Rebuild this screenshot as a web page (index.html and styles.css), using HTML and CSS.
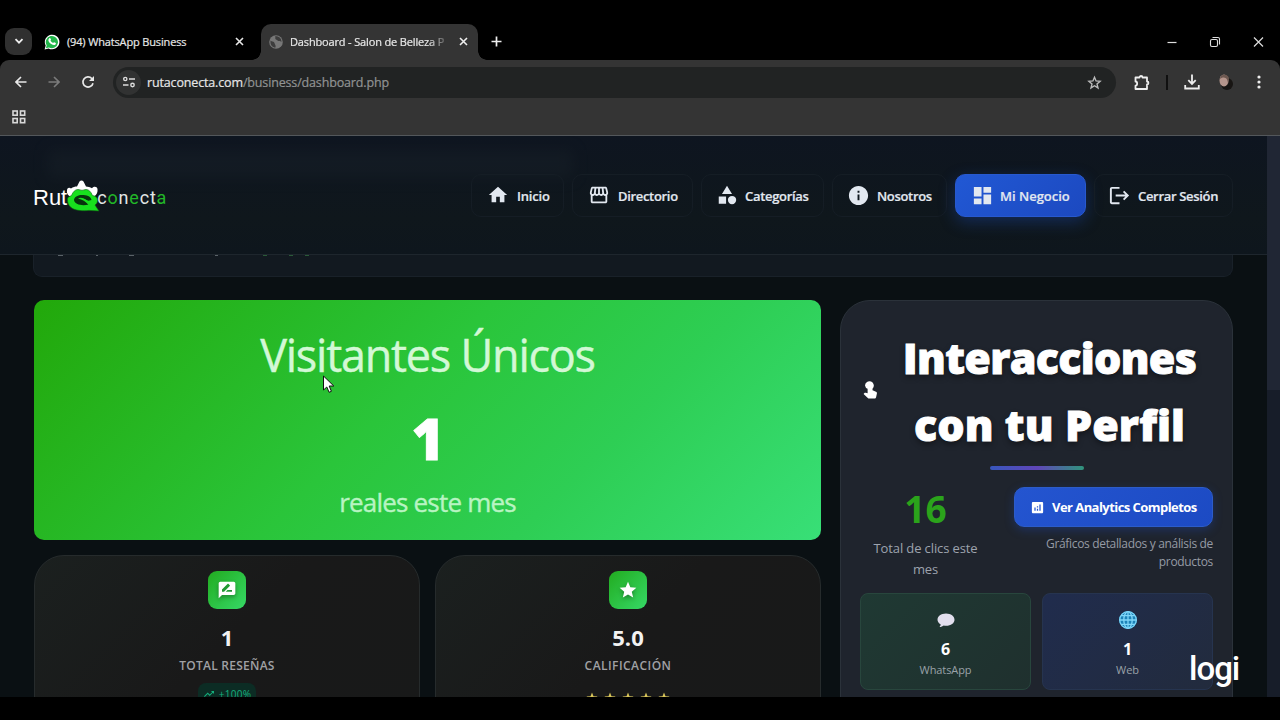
FILE: index.html
```html
<!DOCTYPE html>
<html lang="es">
<head>
  <meta charset="UTF-8">
  <meta name="viewport" content="width=device-width, initial-scale=1.0">
  <title>Dashboard - Salon de Belleza</title>
  <link rel="stylesheet" href="styles.css">
</head>
<body>
  <!-- Browser tabs -->
  <div class="tabs">
    <div class="tab-search">
      <svg width="10" height="10" viewBox="0 0 10 10"><path d="M1.5 3.2L5 6.7l3.5-3.5" fill="none" stroke="#eee" stroke-width="1.8"/></svg>
    </div>
    <div class="tab">
      <svg class="favicon" width="16" height="16" viewBox="0 0 16 16">
        <path d="M.6 15.5l1.1-4A7.3 7.3 0 1 1 4.600 14.400z" fill="#fff"/>
        <path d="M1.900 14.200l.8-2.900A6.100 6.100 0 1 1 4.900 13.400z" fill="#22b64a"/>
        <path d="M5.300 4.200c.5-.5 1-.3 1.200.2l.5 1.100c.1.300-.4.900-.6 1.100.6 1.200 1.500 2 2.700 2.500.4-.4.800-1.100 1.100-.9l1.600.8c.4.200-.1 1.400-.7 1.800-1 .6-2.400.2-3.900-.8-1.500-1-2.500-2.400-2.800-3.600-.1-.9.400-1.700.9-2.200z" fill="#fff"/>
      </svg>
      <span class="tab-title tab-title-wa">(94) WhatsApp Business</span>
      <svg class="tab-close" width="9" height="9" viewBox="0 0 9 9"><path d="M1 1l7 7M8 1L1 8" stroke="#e8e8e8" stroke-width="1.600"/></svg>
    </div>
    <div class="tab tab-active">
      <svg class="favicon" width="14" height="14" viewBox="0 0 14 14">
        <circle cx="7" cy="7" r="6.800" fill="#777"/>
        <path d="M1.500 5.500C3 7 5 6 5.500 8s1.500 2 1 4.500C3.500 12.500 1 10 1.500 5.500zM6 1.500c1 1.500-.5 2.500 1 3s2 2 4 1.500l1.500 1C12.500 3 9 .8 6 1.500z" fill="#3d3d3d"/>
      </svg>
      <span class="tab-title tab-title-fade">Dashboard - Salon de Belleza P</span>
      <svg class="tab-close" width="9" height="9" viewBox="0 0 9 9"><path d="M1 1l7 7M8 1L1 8" stroke="#eee" stroke-width="1.600"/></svg>
    </div>
    <svg class="new-tab" width="11" height="11" viewBox="0 0 11 11"><path d="M5.500 .5v10M.5 5.500h10" stroke="#eee" stroke-width="1.700"/></svg>
    <div class="window-buttons">
      <svg width="10" height="12" viewBox="0 0 10 12"><path d="M.5 6.500h9" stroke="#ddd" stroke-width="1.200"/></svg>
      <svg width="12" height="12" viewBox="0 0 12 12"><g fill="none" stroke="#ddd" stroke-width="1.100"><rect x="1.500" y="3.500" width="7" height="7" rx="1.500"/><path d="M3.500 1.500H9a1.500 1.500 0 0 1 1.500 1.500v5.500"/></g></svg>
      <svg width="11" height="12" viewBox="0 0 11 12"><path d="M1 1.500l9 9M10 1.500l-9 9" stroke="#ddd" stroke-width="1.200"/></svg>
    </div>
  </div>

  <!-- Browser toolbar -->
  <div class="toolbar">
    <div class="toolbar-row">
      <svg class="tb-back" width="12" height="12" viewBox="0 0 12 12"><path d="M11.500 6H1.500M6 1L1 6l5 5" fill="none" stroke="#e8e8e8" stroke-width="1.600"/></svg>
      <svg class="tb-forward" width="12" height="12" viewBox="0 0 12 12"><path d="M.5 6h10M6 1l5 5-5 5" fill="none" stroke="#7b7b7b" stroke-width="1.600"/></svg>
      <svg class="tb-reload" width="14" height="14" viewBox="0 0 14 14"><path d="M12 8.200A5.100 5.100 0 1 1 10.800 3.500l1 1" fill="none" stroke="#e8e8e8" stroke-width="1.700"/><path d="M13 1v5H8z" fill="#e8e8e8"/></svg>
      <div class="omnibox">
        <div class="site-info">
          <svg width="14" height="12" viewBox="0 0 14 12"><g fill="none" stroke="#ddd" stroke-width="1.400"><circle cx="3.300" cy="3" r="1.600"/><path d="M7 3h6M1 9h5.500"/><circle cx="10.500" cy="9" r="1.700"/></g></svg>
        </div>
        <span class="url">rutaconecta.com<span class="url-path">/business/dashboard.php</span></span>
        <svg class="bookmark" width="15" height="15" viewBox="0 0 24 24"><path d="M12 3.500l2.500 6 6.500.5-5 4.300 1.600 6.400-5.600-3.500-5.600 3.500L8 14.300 3 10l6.500-.5z" fill="none" stroke="#bbb" stroke-width="2.200"/></svg>
      </div>
      <svg class="tb-ext" width="17" height="17" viewBox="0 0 17 17"><path d="M2.500 3.500h4c0-2 3-2 3 0H14v4c1.900 0 1.900 3 0 3V15H2.500v-3.300c2.200 0 2.200-4.200 0-4.200z" fill="none" stroke="#eee" stroke-width="1.800" stroke-linejoin="round"/></svg>
      <span class="tb-divider"></span>
      <svg class="tb-download" width="16" height="16" viewBox="0 0 16 16"><path d="M8 .5v9M4.300 6.200L8 9.900l3.700-3.700M1.200 11v3.500h13.600V11" fill="none" stroke="#eee" stroke-width="1.800"/></svg>
      <svg class="avatar" width="16" height="18" viewBox="0 0 16 18">
        <ellipse cx="9" cy="11" rx="6" ry="6" fill="#181513"/>
        <ellipse cx="6" cy="7.500" rx="4.500" ry="6" fill="#b5958c"/>
        <path d="M2 6C2 1 9 0 11 5l-1 6C10 6 7 2.500 2 6z" fill="#6d5850"/>
      </svg>
      <svg class="tb-menu" width="4" height="14" viewBox="0 0 4 14"><g fill="#eee"><circle cx="2" cy="2" r="1.600"/><circle cx="2" cy="7" r="1.600"/><circle cx="2" cy="12" r="1.600"/></g></svg>
    </div>
    <div class="bookmarks-row">
      <svg width="14" height="14" viewBox="0 0 14 14"><g fill="none" stroke="#d8d8d8" stroke-width="1.600"><rect x="1" y="1" width="4.200" height="4.200"/><rect x="8.500" y="1" width="4.200" height="4.200"/><rect x="1" y="8.500" width="4.200" height="4.200"/><rect x="8.500" y="8.500" width="4.200" height="4.200"/></g></svg>
    </div>
  </div>

  <div class="viewport">
    <div class="page">
      <header class="header">
        <div class="header-ghost"></div>
        <div class="logo">
          <span class="logo-ruta">Rut</span>
          <svg class="logo-mark" width="34" height="32" viewBox="0 0 34 32">
            <path d="M1 10.500C1 8 3 7 5 8.500 7 7 9 6.500 11 6.500l2.500-5C14.500 0 16.500 0 17.500 1.500L20 6.500c2 0 4 .8 6 1.800C28 6 31 6.500 31.500 9c.3 3-.5 6-3.500 7.500H5C2 16 .5 13 1 10.500z" fill="#fff"/>
            <path d="M1.500 19c0-2 2-2.500 4-3.500C7 12 9 9.500 12 9.500c1.500 0 2.500.8 4 .8s2.500-.8 4-.8c3 0 5 2.500 6.500 6 3 .5 5 2 5 5 0 2-1 3.500-2.500 4.500l4 6-10-.6C18 31 9 31 5 27.500c-3-2.800-3.700-5.500-3.500-8.500z" fill="#18e01e" stroke="#0b5f12" stroke-width=".6"/>
            <path d="M8 19.500c1-3.500 5-5 9.500-4.500 5 .5 7.500 2 8 5l-3 .8-4.500-1.800 4.500 5.500C17 26 8 25 8 19.500z" fill="#07330d"/>
            <path d="M12 18.500c4-2 9 .5 13 7.500l-2-1c-3.500-3.500-6.500-5.500-11-6.500z" fill="#18e01e"/>
          </svg>
          <span class="logo-conecta">c<b>o</b>n<b>e</b>ct<b>a</b></span>
        </div>
        <nav class="nav">
          <a class="nav-item nav-inicio"><svg width="22" height="22" viewBox="0 0 24 24"><path d="M10 20v-6h4v6h5v-8h3L12 3 2 12h3v8z"/></svg><span>Inicio</span></a>
          <a class="nav-item nav-directorio"><svg width="22" height="22" viewBox="0 0 24 24"><path d="M21.900 8.890l-1.050-4.370c-.22-.9-1-1.520-1.910-1.520H5.050c-.9 0-1.690.63-1.900 1.520L2.100 8.890c-.24 1.020-.02 2.060.62 2.880.08.11.19.19.28.29V19c0 1.100.9 2 2 2h14c1.100 0 2-.9 2-2v-6.940c.09-.09.2-.18.28-.28.64-.82.87-1.870.62-2.890zm-2.990-3.900l1.050 4.370c.1.420.01.840-.25 1.170-.14.180-.44.470-.94.470-.61 0-1.140-.49-1.210-1.140L16.980 5l1.930-.01zM13 5h1.960l.54 4.520c.05.390-.07.780-.33 1.070-.22.260-.54.410-.95.410-.67 0-1.220-.59-1.220-1.310V5zM8.490 9.520L9.040 5H11v4.690c0 .72-.55 1.310-1.290 1.310-.34 0-.65-.15-.89-.41-.25-.29-.37-.68-.33-1.070zm-4.450-.16L5.050 5h1.970l-.58 4.860c-.08.650-.6 1.140-1.210 1.140-.49 0-.8-.29-.93-.47-.27-.32-.36-.75-.26-1.170zM5 19v-6.030c.08.010.15.030.23.030.87 0 1.660-.36 2.240-.95.6.6 1.400.95 2.310.95.87 0 1.650-.36 2.230-.93.590.570 1.390.93 2.290.93.840 0 1.640-.35 2.240-.95.580.590 1.370.950 2.240.950.080 0 .150-.020.230-.030V19H5z"/></svg><span>Directorio</span></a>
          <a class="nav-item nav-categorias"><svg width="22" height="22" viewBox="0 0 24 24"><path d="M12 2l-5.500 9h11zM3 13.500h8v8H3z"/><circle cx="17.500" cy="17.500" r="4.500"/></svg><span>Categorías</span></a>
          <a class="nav-item nav-nosotros"><svg width="23" height="23" viewBox="0 0 24 24"><path d="M12 2C6.480 2 2 6.480 2 12s4.480 10 10 10 10-4.480 10-10S17.520 2 12 2zm1 15h-2v-6h2v6zm0-8h-2V7h2v2z"/></svg><span>Nosotros</span></a>
          <a class="nav-item nav-negocio"><svg width="23" height="23" viewBox="0 0 24 24"><path d="M3 13h8V3H3v10zm0 8h8v-6H3v6zm10 0h8V11h-8v10zm0-18v6h8V3h-8z"/></svg><span>Mi Negocio</span></a>
          <a class="nav-item nav-salir"><svg width="23" height="23" viewBox="0 0 24 24"><path d="M17 7l-1.410 1.410L18.170 11H8v2h10.170l-2.580 2.580L17 17l5-5zM4 5h8V3H4c-1.100 0-2 .9-2 2v14c0 1.100.9 2 2 2h8v-2H4V5z"/></svg><span>Cerrar Sesión</span></a>
        </nav>
      </header>

      <main class="content">
        <section class="profile-bar">
          <i class="m1"></i><i class="m2"></i><i class="m3"></i><i class="m4"></i><i class="m5"></i><i class="m6"></i><i class="m7"></i>
        </section>
        <div class="columns">
          <div class="left">
            <section class="visitors">
              <h2><span>Visitantes Únicos</span></h2>
              <div class="visitors-count">1</div>
              <p><span>reales este mes</span></p>
            </section>
            <div class="stats">
              <section class="stat">
                <div class="stat-icon"><svg width="20" height="20" viewBox="0 0 24 24"><path d="M20 2H4c-1.100 0-1.990.9-1.990 2L2 22l4-4h14c1.100 0 2-.9 2-2V4c0-1.100-.9-2-2-2zM6 14v-2.470l6.880-6.880c.2-.2.510-.2.710 0l1.770 1.770c.2.2.2.510 0 .710L8.470 14H6zm12 0h-7.500l2-2H18v2z"/></svg></div>
                <div class="stat-value">1</div>
                <div class="stat-label stat-label-total">TOTAL RESEÑAS</div>
                <div class="trend"><svg width="12" height="12" viewBox="0 0 24 24"><path d="M16 6l2.290 2.290-4.880 4.880-4-4L2 16.590 3.410 18l6-6 4 4 6.300-6.290L22 12V6z"/></svg><span>+100%</span></div>
              </section>
              <section class="stat">
                <div class="stat-icon"><svg width="20" height="20" viewBox="0 0 24 24"><path d="M12 17.270L18.180 21l-1.640-7.030L22 9.240l-7.190-.61L12 2 9.190 8.630 2 9.240l5.460 4.730L5.820 21z"/></svg></div>
                <div class="stat-value">5.0</div>
                <div class="stat-label stat-label-cal">CALIFICACIÓN</div>
                <div class="stars">
                  <svg viewBox="0 0 24 24"><path d="M12 1l3 7.600 8 .4-6.200 5L19 22l-7-4.500L5 22l2.200-8L1 9l8-.4z"/></svg>
                  <svg viewBox="0 0 24 24"><path d="M12 1l3 7.600 8 .4-6.200 5L19 22l-7-4.500L5 22l2.200-8L1 9l8-.4z"/></svg>
                  <svg viewBox="0 0 24 24"><path d="M12 1l3 7.600 8 .4-6.200 5L19 22l-7-4.500L5 22l2.200-8L1 9l8-.4z"/></svg>
                  <svg viewBox="0 0 24 24"><path d="M12 1l3 7.600 8 .4-6.200 5L19 22l-7-4.500L5 22l2.200-8L1 9l8-.4z"/></svg>
                  <svg viewBox="0 0 24 24"><path d="M12 1l3 7.600 8 .4-6.200 5L19 22l-7-4.500L5 22l2.200-8L1 9l8-.4z"/></svg>
                </div>
              </section>
            </div>
          </div>

          <aside class="interactions">
            <div class="int-head">
              <svg class="touch" width="14" height="18" viewBox="0 0 14 18"><path d="M2 4.500a4.400 4.400 0 1 1 7.500 3.200v1.500l3.500 1.500c.8.400 1 .9.900 1.700l-.8 3.800c-.2.900-.8 1.300-1.600 1.300H6.200c-.6 0-1-.2-1.400-.6L.6 13l.8-.9c.4-.4.900-.5 1.400-.3l1.800.5V7.800A4.200 4.200 0 0 1 2 4.500z"/></svg>
              <h2><span class="h-line1">Interacciones</span><span class="h-line2">con tu Perfil</span></h2>
            </div>
            <div class="accent"></div>
            <div class="clicks">
              <div class="clicks-total">
                <div class="clicks-num">16</div>
                <div class="clicks-label"><span>Total de clics este</span><span>mes</span></div>
              </div>
              <div class="clicks-more">
                <a class="btn-analytics">
                  <svg width="15" height="15" viewBox="0 0 24 24"><path d="M19 3H5c-1.100 0-2 .9-2 2v14c0 1.100.9 2 2 2h14c1.100 0 2-.9 2-2V5c0-1.100-.9-2-2-2zM9 17H7v-5h2v5zm4 0h-2v-3h2v3zm0-5h-2v-2h2v2zm4 5h-2V7h2v10z"/></svg>
                  <span>Ver Analytics Completos</span>
                </a>
                <div class="more-label"><span>Gráficos detallados y análisis de</span><span>productos</span></div>
              </div>
            </div>
            <div class="channels">
              <div class="channel channel-wa">
                <svg width="20" height="20" viewBox="0 0 20 20"><path d="M10 3.500c5 0 8.500 2.800 8.500 6.200s-3.500 6-8.500 6c-.8 0-1.600-.1-2.300-.2-1 .8-2.400 1.500-4.200 1.500.8-.8 1.200-1.700 1.100-2.700C2.700 13.200 1.500 11.600 1.500 9.700c0-3.400 3.500-6.200 8.500-6.200z" fill="#e2dfee"/></svg>
                <b>6</b>
                <span class="ch-wa">WhatsApp</span>
              </div>
              <div class="channel channel-web">
                <svg width="20" height="20" viewBox="0 0 20 20"><circle cx="10" cy="10" r="9" fill="#1c83b8"/><g fill="none" stroke="#7fd6f8" stroke-width="1.300"><circle cx="10" cy="10" r="8.300"/><ellipse cx="10" cy="10" rx="4.200" ry="8.300"/><path d="M10 1.500v17M1.500 10h17M3 5.600h14M3 14.400h14"/></g></svg>
                <b>1</b>
                <span class="ch-web">Web</span>
              </div>
            </div>
          </aside>
        </div>
      </main>
    </div>
    <div class="scrollbar"><div class="thumb"></div></div>
  </div>

  <div class="watermark">logi</div>
  <svg class="cursor" width="14" height="20" viewBox="0 0 14 20"><path d="M1.500 1v14l3.300-3 2.300 5.300 2.300-1L7.200 11h4.600z" fill="#fff" stroke="#111" stroke-width="1"/></svg>
</body>
</html>
```
FILE: styles.css
```css
* {
  box-sizing: border-box;
}
body {
  margin: 0;
  width: 1280px;
  height: 720px;
  overflow: hidden;
  position: relative;
  background: #000;
  color: #fff;
  font-family: "Open Sans", "Noto Sans", sans-serif;
  display: flex;
  flex-direction: column;
}
svg {
  display: block;
  flex: none;
}
h2, p {
  margin: 0;
}
span {
  white-space: nowrap;
}

/* browser */
.tabs {
  height: 60px;
  padding: 24px 16px 0 5px;
  display: flex;
  align-items: center;
  flex: none;
}
.tab-search {
  width: 27px;
  height: 27px;
  margin-bottom: 2px;
  border-radius: 9px;
  background: #303030;
  display: flex;
  align-items: center;
  justify-content: center;
}
.tab {
  display: flex;
  align-items: center;
  width: 229px;
  height: 36px;
  padding-left: 12px;
  padding-bottom: 1px;
}
.tab-active {
  position: relative;
  width: 217px;
  padding-left: 8px;
  padding-right: 10px;
  background: #343434;
  border-radius: 10px 10px 0 0;
}
.tab-active::before, .tab-active::after {
  content: "";
  position: absolute;
  bottom: 0;
  width: 9px;
  height: 9px;
}
.tab-active::before {
  left: -9px;
  background: radial-gradient(circle at 0 0, transparent 8.500px, #343434 9px);
}
.tab-active::after {
  right: -9px;
  background: radial-gradient(circle at 100% 0, transparent 8.500px, #343434 9px);
}
.tab-title {
  font-size: 11px;
  margin-left: 7px;
  flex: 1;
  color: #e8e8e8;
  letter-spacing: -0.150px;
  -webkit-text-stroke: 0.200px #e8e8e8;
}
.tab .tab-close {
  margin-right: 17px;
}
.tab-active .tab-close {
  margin: 0 0 0 10px;
}
.tab-title-fade {
  -webkit-mask-image: linear-gradient(to right, #000 138px, transparent 160px);
  mask-image: linear-gradient(to right, #000 138px, transparent 160px);
}
.new-tab {
  margin: 0 0 1px 13px;
}
.window-buttons {
  margin: 0 0 1px auto;
  display: flex;
  align-items: center;
  gap: 32px;
}
.toolbar {
  height: 76px;
  flex: none;
  background: #343434;
  border-radius: 9px 9px 0 0;
  border-bottom: 1px solid #53575b;
}
.toolbar-row {
  height: 44px;
  padding-left: 15px;
  display: flex;
  align-items: center;
}
.tb-forward {
  margin-left: 21px;
}
.tb-reload {
  margin-left: 21px;
}
.omnibox {
  width: 1003px;
  height: 31px;
  margin-left: 18px;
  padding: 0 14px 0 3px;
  border-radius: 16px;
  background: #212323;
  display: flex;
  align-items: center;
}
.site-info {
  width: 25px;
  height: 25px;
  border-radius: 50%;
  background: #313232;
  display: flex;
  align-items: center;
  justify-content: center;
}
.url {
  margin-left: 6px;
  font-size: 12.500px;
  letter-spacing: -0.150px;
  color: #e6e6e6;
  -webkit-text-stroke: 0.200px currentColor;
}
.url-path {
  color: #919393;
}
.bookmark {
  margin-left: auto;
}
.tb-ext {
  margin-left: 17px;
}
.tb-divider {
  width: 2px;
  height: 15px;
  margin-left: 16px;
  background: #101010;
}
.tb-download {
  margin-left: 16px;
}
.avatar {
  margin-left: 18px;
}
.tb-menu {
  margin-left: 23px;
}
.bookmarks-row {
  padding: 6px 0 0 12px;
}

/* page */
.viewport {
  height: 561px;
  flex: none;
  display: flex;
  overflow: hidden;
  background: #0a1013;
}
.page {
  width: 1267px;
}
.scrollbar {
  width: 13px;
  background: #171d29;
}
.thumb {
  height: 254px;
  background: #202634;
}
.header {
  position: relative;
  height: 119px;
  padding: 0 34px 0 33px;
  display: flex;
  align-items: center;
  justify-content: space-between;
  background: linear-gradient(to bottom, #0e1520, #0f171c 70%, #0e161d);
  border-bottom: 1px solid #1e262d;
}
.header-ghost {
  position: absolute;
  left: 48px;
  top: 14px;
  width: 525px;
  height: 28px;
  background: #182028;
  opacity: 0.5;
  filter: blur(7px);
}
.logo {
  position: relative;
  display: flex;
  align-items: center;
  height: 44px;
  font-family: "Liberation Sans", sans-serif;
}
.logo-ruta {
  font-size: 22px;
  margin-top: 6px;
}
.logo-mark {
  margin: 1px -3px 0 -1px;
}
.logo-conecta {
  font-family: Roboto, sans-serif;
  font-size: 18px;
  color: #e2e6e6;
  letter-spacing: 0.800px;
  margin-top: 4px;
}
.logo-conecta b {
  color: #22b728;
  font-weight: 400;
}
.nav {
  position: relative;
  display: flex;
  gap: 8px;
}
.nav-item {
  height: 43px;
  border: 1px solid #151d25;
  border-radius: 10px;
  padding-left: 15px;
  display: flex;
  align-items: center;
  gap: 8px;
  font-size: 13px;
  font-weight: 600;
  letter-spacing: -0.320px;
  color: #e2e8f0;
  fill: #e2e8f0;
  -webkit-text-stroke: 0.200px #e2e8f0;
}
.nav-item span {
  padding-top: 1px;
}
.nav-item svg {
  -webkit-text-stroke: 0;
}
.nav-inicio { width: 93px; letter-spacing: -0.200px; }
.nav-directorio { width: 121px; }
.nav-categorias { width: 123px; padding-left: 14px; gap: 7px; }
.nav-nosotros { width: 115px; padding-left: 14px; gap: 7px; }
.nav-salir { width: 139px; padding-left: 13px; gap: 7px; }
.nav-item.nav-negocio {
  width: 131px;
  gap: 6px;
  letter-spacing: 0;
  border-color: #2859cf;
  background: linear-gradient(135deg, #2158d4, #1c49c0);
  box-shadow: 0 5px 16px rgba(30, 80, 200, 0.350);
}
.content {
  padding-left: 33px;
}
.profile-bar {
  position: relative;
  width: 1200px;
  height: 22px;
  border: 1px solid #192129;
  border-top: none;
  border-radius: 0 0 9px 9px;
  background: #121920;
  display: flex;
}
/* bottoms of the text line hidden under the header */
.profile-bar i {
  height: 1px;
  width: 4px;
  background: #5a6268;
}
.profile-bar .m1 { margin-left: 24px; width: 5px; }
.profile-bar .m2 { margin-left: 33px; width: 2px; }
.profile-bar .m3 { margin-left: 31px; width: 5px; }
.profile-bar .m4 { margin-left: 81px; width: 3px; }
.profile-bar .m5 { margin-left: 45px; background: #2a5a38; }
.profile-bar .m6 { margin-left: 22px; background: #2a5a38; }
.profile-bar .m7 { margin-left: 12px; background: #2a5a38; }
.columns {
  display: flex;
  gap: 19px;
  margin: 23px 0 0 1px;
}
.left {
  width: 787px;
}
.visitors {
  height: 240px;
  border-radius: 10px;
  background: linear-gradient(135deg, #22a80a 0%, #2ac53a 45%, #2ece54 70%, #38df77 100%);
  display: flex;
  flex-direction: column;
  align-items: center;
  overflow: hidden;
}
.visitors h2 {
  font-size: 45px;
  line-height: 60px;
  margin-top: 25px;
  font-weight: 400;
  letter-spacing: -1.250px;
  color: #d3f8d6;
  -webkit-text-stroke: 0.400px #d3f8d6;
}
.visitors-count {
  font-size: 56px;
  line-height: 70px;
  margin: 18px 0 0 1px;
  font-weight: 800;
  -webkit-text-stroke: 0.800px #fff;
}
.visitors p {
  font-size: 26px;
  line-height: 36px;
  margin-top: 11px;
  letter-spacing: -0.800px;
  color: #b8f4c2;
  -webkit-text-stroke: 0.400px #b8f4c2;
}
.stats {
  margin-top: 15px;
  display: flex;
  gap: 15px;
}
.stat {
  width: 386px;
  height: 170px;
  padding-top: 15px;
  border: 1px solid #262b2c;
  border-radius: 30px 30px 0 0;
  background: linear-gradient(135deg, #1b201f, #191919 50%, #181919);
  display: flex;
  flex-direction: column;
  align-items: center;
}
.stat-icon {
  width: 38px;
  height: 38px;
  border-radius: 9px;
  background: linear-gradient(135deg, #22ab20, #36d966);
  fill: #fff;
  display: flex;
  align-items: center;
  justify-content: center;
}
.stat-icon svg {
  filter: drop-shadow(0 2px 2px rgba(0, 0, 0, 0.350));
}
.stat-value {
  margin-top: 13px;
  font-size: 22px;
  line-height: 30px;
  font-weight: 700;
  color: #f2f2f2;
}
.stat-label {
  margin-top: 6px;
  font-size: 12px;
  line-height: 16px;
  font-weight: 600;
  color: #a0a1a5;
}
.stat-label-total {
  letter-spacing: 0.250px;
}
.stat-label-cal {
  letter-spacing: 0.450px;
}
.trend {
  margin-top: 9px;
  height: 22px;
  padding: 0 5px;
  border-radius: 8px;
  background: #0c2c24;
  display: flex;
  align-items: center;
  gap: 4px;
  font-size: 10px;
  color: #14b07c;
  fill: #14b07c;
}
.trend span {
  letter-spacing: 0.300px;
}
.stars {
  margin-top: 18px;
  display: flex;
  gap: 6px;
  fill: #d9c65a;
}
.stars svg {
  width: 12px;
  height: 12px;
}
.interactions {
  width: 393px;
  height: 420px;
  border: 1px solid #2b323a;
  border-radius: 30px 30px 0 0;
  background: #1f242d;
  padding: 23px 19px 0;
}
.int-head {
  display: flex;
  align-items: center;
  padding-left: 3px;
}
.touch {
  fill: #fff;
  margin-top: -3px;
}
.int-head h2 {
  flex: 1;
  display: flex;
  flex-direction: column;
  align-items: center;
  font-size: 43px;
  line-height: 67px;
  font-weight: 800;
  padding-left: 9px;
  -webkit-text-stroke: 0.900px #fff;
  text-shadow: 0 3px 6px rgba(0, 0, 0, 0.450);
}
.h-line1 {
  letter-spacing: -0.700px;
}
.h-line2 {
  letter-spacing: 0.100px;
}
.accent {
  width: 94px;
  height: 4px;
  margin: 8px auto 0;
  border-radius: 2px;
  background: linear-gradient(to right, #3857bd, #6046b8 50%, #30957c);
}
.clicks {
  display: flex;
  justify-content: space-between;
  margin-top: 17px;
}
.clicks-total {
  width: 131px;
  text-align: center;
}
.clicks-num {
  font-size: 37px;
  line-height: 43px;
  font-weight: 700;
  color: #2ba31b;
}
.clicks-label, .more-label {
  display: flex;
  flex-direction: column;
}
.clicks-label {
  margin-top: 8px;
  align-items: center;
  font-size: 13px;
  line-height: 21px;
  letter-spacing: -0.120px;
  color: #9da3ad;
}
.clicks-more {
  width: 199px;
}
.btn-analytics {
  height: 40px;
  padding-left: 15px;
  border-radius: 10px;
  background: linear-gradient(135deg, #2455d0, #1c4ac3);
  border: 1px solid #2c5cc9;
  box-shadow: 0 3px 10px rgba(30, 75, 190, 0.350);
  display: flex;
  align-items: center;
  gap: 7px;
  font-size: 13px;
  font-weight: 700;
  letter-spacing: -0.550px;
  fill: #fff;
}
.more-label {
  margin-top: 8px;
  align-items: flex-end;
  font-size: 12px;
  line-height: 18px;
  letter-spacing: -0.330px;
  color: #969ba5;
}
.channels {
  display: flex;
  gap: 11px;
  margin-top: 13px;
}
.channel {
  width: 171px;
  height: 97px;
  padding-top: 16px;
  border: 1px solid #28463d;
  border-radius: 8px;
  background: linear-gradient(135deg, #1f3933, #1f302e);
  display: flex;
  flex-direction: column;
  align-items: center;
}
.channel-web {
  border-color: #26344f;
  background: linear-gradient(135deg, #202c4d, #222b3d);
}
.channel b {
  margin-top: 8px;
  font-size: 16px;
  line-height: 22px;
}
.channel span {
  margin-top: 2px;
  font-size: 11px;
  line-height: 16px;
  letter-spacing: -0.100px;
  color: #9aa2a8;
}
.watermark {
  position: absolute;
  left: 1189px;
  top: 647px;
  font-family: Roboto, sans-serif;
  font-size: 33px;
  line-height: 44px;
  font-weight: 500;
  letter-spacing: -1px;
}
.cursor {
  position: absolute;
  left: 322px;
  top: 375px;
}
```
